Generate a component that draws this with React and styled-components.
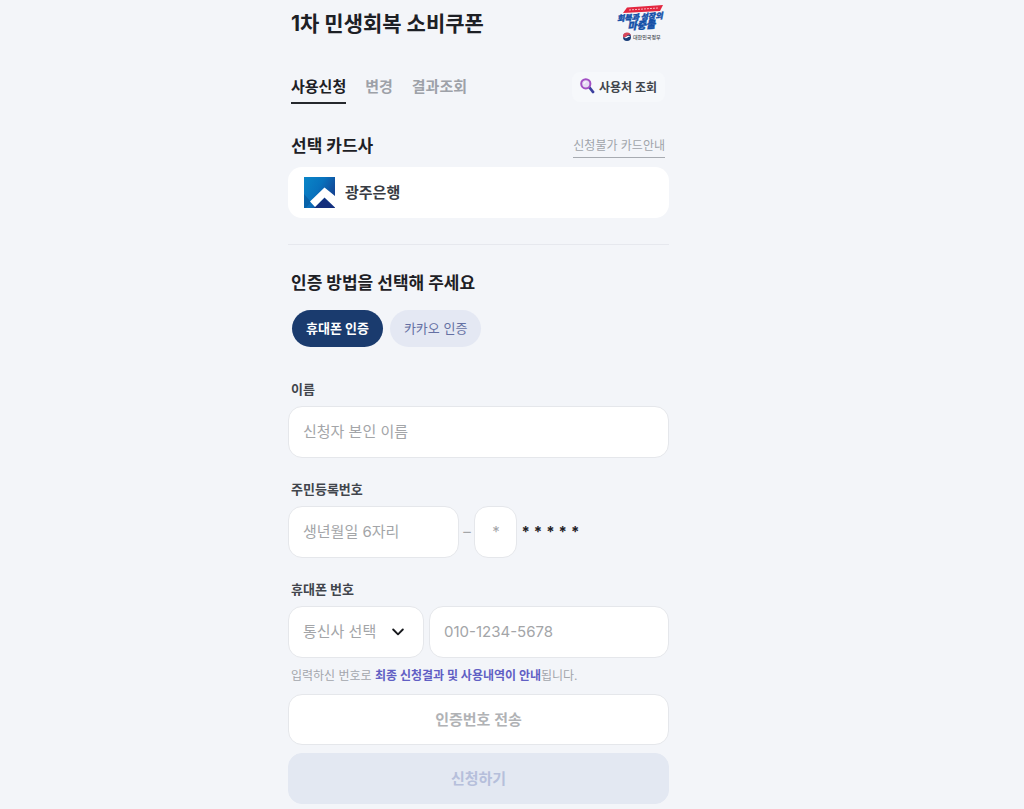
import React from 'react'
import styled, { createGlobalStyle } from 'styled-components'
import { useState } from 'react'

const GlobalStyle = createGlobalStyle`
    * {
        box-sizing: border-box;
    }

    body {
        margin: 0;
        background-color: #f3f5f9;
        color: #1d2025;
        font-family: Inter, "Noto Sans CJK KR", sans-serif;
        font-size: 15px;
    }

    button, input, select {
        font-family: inherit;
    }
`;

const tabs = ['사용신청', '변경', '결과조회']
const methods = ['휴대폰 인증', '카카오 인증']

function CampaignLogo() {
    return (
        <svg width="50" height="40" viewBox="0 0 50 40" role="img" aria-label="회복과 성장의 마중물">
            <path d="M12 3.500L48 1l-3 6L8 9z" fill="#e3263f" />
            <path d="M14 6L43 4" stroke="#f6b6c0" strokeWidth="1" strokeDasharray="2 1" />
            <g fill="#1450a8" stroke="#1450a8" strokeWidth="0.400" fontWeight="900" fontStyle="italic" transform="rotate(-4 25 16)">
                <text x="25" y="16" fontSize="8" textAnchor="middle">회복과 성장의</text>
                <text x="26" y="25" fontSize="10" textAnchor="middle">마중물</text>
            </g>
            <circle cx="12" cy="33" r="4" fill="#173b78" />
            <path d="M8 33a4 4 0 0 1 8-1c-2-2-3-1-4 0s-3 2-4 1z" fill="#d8465a" />
            <path d="M8.500 33c2 1 3-.5 4-1s2-.5 3 .5c-1 0-2 0-3 1s-3 1-4-.5z" fill="#fff" />
            <text x="18" y="35" fontSize="5" fontWeight="500" fill="#4a4e57">대한민국정부</text>
        </svg>
    )
}

function MagnifierIcon() {
    return (
        <svg width="16" height="16" viewBox="0 0 16 16" aria-hidden="true">
            <path d="M9.500 9.500L13 14" stroke="#3b3f9e" strokeWidth="2.800" strokeLinecap="round" />
            <circle cx="5.800" cy="5.800" r="4.600" fill="#e6dcf3" stroke="#a24fc4" strokeWidth="2" />
            <path d="M3.800 5.800A2.300 2.300 0 0 1 6 3.700" fill="none" stroke="#fff" strokeWidth="1" strokeLinecap="round" />
        </svg>
    )
}

function BankLogo() {
    return (
        <svg width="31" height="31" viewBox="0 0 31 31" aria-hidden="true">
            <defs>
                <linearGradient id="bankBlue" x1="0" y1="0" x2="1" y2="0.600">
                    <stop offset="0" stopColor="#0a86c8" />
                    <stop offset="0.500" stopColor="#0872bd" />
                    <stop offset="1" stopColor="#153f8f" />
                </linearGradient>
            </defs>
            <path d="M0 0h31v31H0z" fill="url(#bankBlue)" />
            <path d="M0 17l7 8-5 6H0z" fill="#075a9f" opacity="0.700" />
            <path d="M10 31L20.500 21 31 31z" fill="#142f7d" />
            <path d="M6 24.500L20.500 10.500 31 19v11.500L20.500 20.500 11 30z" fill="#fff" />
        </svg>
    )
}

export default function App() {
    const [tab, setTab] = useState(tabs[0]);
    const [method, setMethod] = useState(methods[0]);

    return (
        <Page>
            <GlobalStyle />
            <Content>
                <Header>
                    <Title>1차 민생회복 소비쿠폰</Title>
                    <CampaignLogo />
                </Header>

                <Navigation>
                    <TabList>
                        {tabs.map((name) => (
                            <Tab key={name} type="button" $active={tab === name} onClick={() => setTab(name)}>{name}</Tab>
                        ))}
                    </TabList>
                    <StoreLink href="#stores">
                        <MagnifierIcon />
                        사용처 조회
                    </StoreLink>
                </Navigation>

                <CardHeading>
                    <SectionTitle>선택 카드사</SectionTitle>
                    <GuideLink href="#guide">신청불가 카드안내</GuideLink>
                </CardHeading>
                <BankCard>
                    <BankLogo />
                    <BankName>광주은행</BankName>
                </BankCard>

                <Divider />

                <SectionTitle>인증 방법을 선택해 주세요</SectionTitle>
                <MethodList>
                    {methods.map((name) => (
                        <MethodButton key={name} type="button" $active={method === name} onClick={() => setMethod(name)}>{name}</MethodButton>
                    ))}
                </MethodList>

                <Form onSubmit={(e) => e.preventDefault()}>
                    <Field>
                        <Label htmlFor="name">이름</Label>
                        <TextInput id="name" type="text" placeholder="신청자 본인 이름" />
                    </Field>

                    <Field>
                        <Label htmlFor="birth">주민등록번호</Label>
                        <ResidentRow>
                            <TextInput id="birth" type="text" inputMode="numeric" maxLength={6} placeholder="생년월일 6자리" />
                            <Dash>–</Dash>
                            <DigitInput aria-label="주민등록번호 뒤 첫 자리" type="text" inputMode="numeric" maxLength={1} placeholder="*" />
                            <Mask>
                                {[1, 2, 3, 4, 5].map((n) => <span key={n}>*</span>)}
                            </Mask>
                        </ResidentRow>
                    </Field>

                    <Field>
                        <Label htmlFor="phone">휴대폰 번호</Label>
                        <PhoneRow>
                            <SelectBox>
                                <Select aria-label="통신사" defaultValue="">
                                    <option value="">통신사 선택</option>
                                    <option>SKT</option>
                                    <option>KT</option>
                                    <option>LG U+</option>
                                </Select>
                                <svg width="12" height="8" viewBox="0 0 12 8" aria-hidden="true">
                                    <path d="M1.200 1.500L6 6.300l4.800-4.800" fill="none" stroke="#17191d" strokeWidth="1.900" strokeLinecap="round" strokeLinejoin="round" />
                                </svg>
                            </SelectBox>
                            <TextInput id="phone" type="tel" placeholder="010-1234-5678" />
                        </PhoneRow>
                        <Hint>입력하신 번호로 <strong>최종 신청결과 및 사용내역이 안내</strong>됩니다.</Hint>
                    </Field>

                    <Actions>
                        <SendButton type="button">인증번호 전송</SendButton>
                        <SubmitButton type="submit">신청하기</SubmitButton>
                    </Actions>
                </Form>
            </Content>
        </Page>
    )
}

const Page = styled.main`
    display: flex;
    justify-content: center;
    padding: 4px 67px 6px 0;
`;

const Content = styled.div`
    width: 100%;
    max-width: 381px;
`;

const Header = styled.header`
    display: flex;
    align-items: center;
    justify-content: space-between;
    padding: 0 4px 0 3px;
`;

const Title = styled.h1`
    margin: 0;
    font-size: 21px;
    line-height: 40px;
    font-weight: 700;
`;

const Navigation = styled.nav`
    display: flex;
    align-items: center;
    justify-content: space-between;
    margin-top: 26px;
    padding: 0 4px 0 3px;
`;

const TabList = styled.div`
    display: flex;
    gap: 19px;
`;

const Tab = styled.button`
    height: 34px;
    padding: 0 0 2px;
    border: none;
    border-bottom: 2px solid ${(props) => (props.$active ? '#25282d' : 'transparent')};
    background: none;
    color: ${(props) => (props.$active ? '#1d2025' : '#9da1a8')};
    font-size: 15px;
    font-weight: 700;
    cursor: pointer;
`;

const StoreLink = styled.a`
    display: flex;
    align-items: center;
    gap: 3px;
    height: 30px;
    padding: 0 8px 2px;
    border-radius: 8px;
    background-color: #f6f8fb;
    color: #41454c;
    font-size: 12px;
    font-weight: 700;
    text-decoration: none;
`;

const CardHeading = styled.div`
    display: flex;
    align-items: center;
    justify-content: space-between;
    margin-top: 29px;
    padding-right: 4px;
`;

const SectionTitle = styled.h2`
    margin: 0;
    padding-left: 3px;
    font-size: 17px;
    line-height: 26px;
    font-weight: 700;
`;

const GuideLink = styled.a`
    border-bottom: 1px solid #a7abb1;
    color: #a0a4aa;
    font-size: 12px;
    line-height: 22px;
    text-decoration: none;
`;

const BankCard = styled.div`
    display: flex;
    align-items: center;
    gap: 10px;
    height: 51px;
    margin-top: 8px;
    padding: 0 16px;
    border-radius: 14px;
    background-color: #fff;
`;

const BankName = styled.span`
    padding-bottom: 2px;
    color: #383c43;
    font-weight: 600;
`;

const Divider = styled.hr`
    margin: 26px 0 25px;
    border: none;
    border-top: 1px solid #e6e8ee;
`;

const MethodList = styled.div`
    display: flex;
    gap: 7px;
    margin-top: 14px;
    padding-left: 4px;
`;

const MethodButton = styled.button`
    height: 37px;
    padding: 0 14px 2px;
    border: none;
    border-radius: 20px;
    background-color: ${(props) => (props.$active ? '#1a3b6e' : '#e4e8f3')};
    color: ${(props) => (props.$active ? '#fff' : '#6470a3')};
    font-size: 13px;
    font-weight: ${(props) => (props.$active ? 700 : 400)};
    cursor: pointer;
`;

const Form = styled.form`
    display: flex;
    flex-direction: column;
    gap: 20px;
    margin-top: 31px;
`;

const Field = styled.div`
    display: flex;
    flex-direction: column;
`;

const Label = styled.label`
    margin-bottom: 6px;
    padding-left: 3px;
    color: #41454c;
    font-size: 13px;
    line-height: 22px;
    font-weight: 700;
`;

const TextInput = styled.input`
    width: 100%;
    min-width: 0;
    height: 52px;
    padding: 0 14px 2px;
    border: 1px solid #e5e7eb;
    border-radius: 14px;
    background-color: #fff;
    color: #1d2025;
    font-size: 15px;

    &::placeholder {
        color: #a3a5a8;
        opacity: 1;
    }

    &:focus {
        outline: none;
        border-color: #1a3b6e;
    }
`;

const DigitInput = styled(TextInput)`
    padding: 0 0 2px;
    text-align: center;
`;

const ResidentRow = styled.div`
    display: grid;
    grid-template-columns: 45% 15px 43px 1fr;
    align-items: center;
`;

const Dash = styled.span`
    padding-bottom: 2px;
    color: #a3a5a8;
    text-align: center;
`;

const Mask = styled.div`
    display: flex;
    gap: 4px;
    padding: 0 0 2px 4px;
    font-weight: 700;
`;

const PhoneRow = styled.div`
    display: grid;
    grid-template-columns: 136px 1fr;
    gap: 5px;
`;

const SelectBox = styled.div`
    display: grid;
    align-items: center;

    select, svg {
        grid-area: 1 / 1;
    }

    svg {
        justify-self: end;
        margin-right: 20px;
        pointer-events: none;
    }
`;

const Select = styled.select`
    width: 100%;
    height: 52px;
    padding: 0 36px 2px 14px;
    border: 1px solid #e5e7eb;
    border-radius: 14px;
    appearance: none;
    background-color: #fff;
    color: #a3a5a8;
    font-size: 15px;
`;

const Hint = styled.p`
    margin: 7px 0 0;
    padding-left: 3px;
    color: #a3a6ac;
    font-size: 12px;
    line-height: 22px;

    strong {
        color: #615fc4;
        font-weight: 700;
    }
`;

const Actions = styled.div`
    display: flex;
    flex-direction: column;
    gap: 8px;
    margin-top: -13px;
`;

const ActionButton = styled.button`
    height: 51px;
    padding: 0 0 3px;
    border: 1px solid #e5e7eb;
    border-radius: 14px;
    font-size: 15px;
    font-weight: 600;
    cursor: pointer;
`;

const SendButton = styled(ActionButton)`
    background-color: #fff;
    color: #b0b2b5;
`;

const SubmitButton = styled(ActionButton)`
    border-color: #e3e8f2;
    background-color: #e3e8f2;
    color: #b6bfdb;
`;
